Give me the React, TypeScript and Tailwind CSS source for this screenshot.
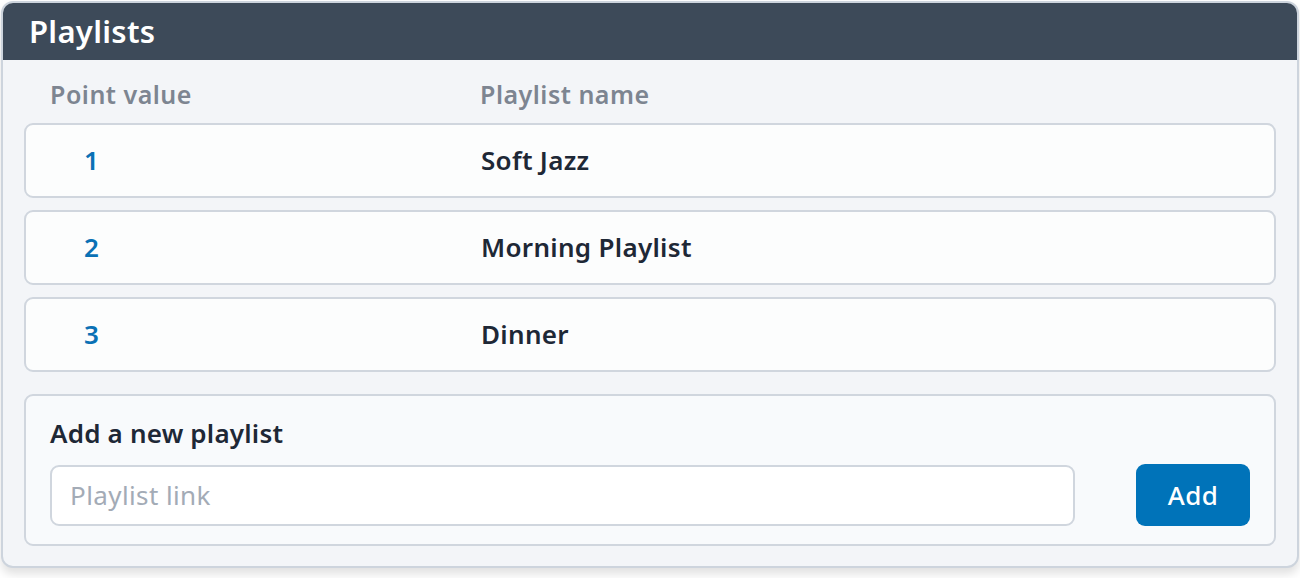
import React from 'react';

const playlists = [
  { points: 1, name: 'Soft Jazz' },
  { points: 2, name: 'Morning Playlist' },
  { points: 3, name: 'Dinner' },
];

export default function App() {
  return (
    <div
      className="h-[578px] w-[1300px] bg-white p-[1px]"
      style={{ fontFamily: '"Noto Sans", "Open Sans", sans-serif' }}
    >
      <div className="overflow-hidden rounded-[12px] border-2 border-[#cdd4dd] bg-[#f3f5f8] shadow-[0_6px_10px_rgba(0,0,0,0.12)]">
        <div className="flex h-[57px] items-center bg-[#3d4a59] px-[26px]">
          <h2 className="text-[31px] font-semibold leading-none tracking-[0.3px] text-white">Playlists</h2>
        </div>

        <div className="px-[21px] pb-[20px] pt-[18px]">
          {/* column headings */}
          <div className="flex h-[34px] items-center text-[25px] font-semibold tracking-[0.5px] text-[#7d8591]">
            <span className="w-[456px] pl-[26px]">Point value</span>
            <span>Playlist name</span>
          </div>

          <ul className="mt-[11px] space-y-[12px]">
            {playlists.map((p) => (
              <li
                key={p.points}
                className="flex h-[75px] items-center rounded-[9px] border-2 border-[#d0d6de] bg-[#fcfdfd] text-[26px] font-semibold tracking-[0.3px]"
              >
                <span className="w-[455px] pl-[58px] text-[#0a71b5]">{p.points}</span>
                <span className="text-[#1e2836]">{p.name}</span>
              </li>
            ))}
          </ul>

          {/* add form */}
          <div className="mt-[22px] rounded-[9px] border-2 border-[#d0d6de] bg-[#f8fafc] px-[24px] pb-[18px] pt-[22px]">
            <h3 className="text-[26px] font-semibold leading-[30px] tracking-[0.2px] text-[#1e2836]">Add a new playlist</h3>
            <div className="mt-[16px] flex items-center justify-between">
              <input
                type="text"
                placeholder="Playlist link"
                className="h-[61px] w-[1025px] rounded-[9px] border-2 border-[#d0d6de] bg-white px-[18px] text-[26px] tracking-[0.4px] text-[#1e2836] outline-none placeholder:text-[#a3abb6]"
              />
              <button className="h-[62px] w-[114px] rounded-[9px] bg-[#0073b9] text-[26px] font-medium tracking-[0.4px] text-white">
                Add
              </button>
            </div>
          </div>
        </div>
      </div>
    </div>
  );
}
